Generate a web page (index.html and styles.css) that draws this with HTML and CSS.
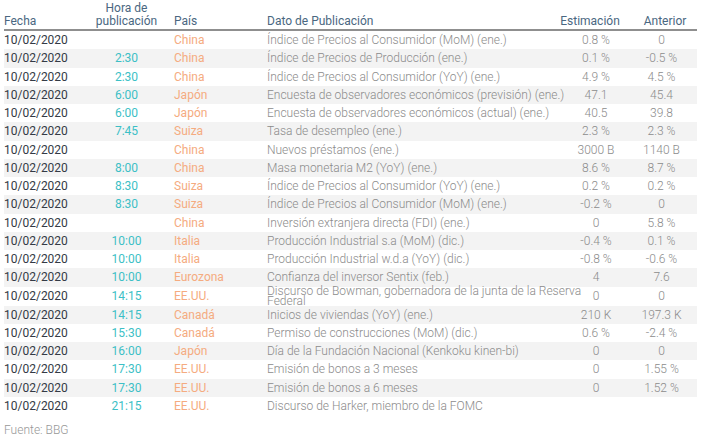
FILE: index.html
```html
<!DOCTYPE html>
<html lang="es">
<head>
<meta charset="utf-8">
<link rel="stylesheet" href="styles.css">
</head>
<body>
<div class="wrap">
<table class="cal">
  <colgroup>
    <col class="c-date"><col class="c-time"><col class="c-country"><col class="c-desc"><col class="c-est"><col class="c-prev">
  </colgroup>
  <thead>
    <tr>
      <th class="left">Fecha</th>
      <th class="center">Hora de<br>publicación</th>
      <th class="left pais">País</th>
      <th class="left">Dato de Publicación</th>
      <th class="center"><span class="est">Estimación</span></th>
      <th class="center ant">Anterior</th>
    </tr>
  </thead>
  <tbody>
    <tr><td class="date">10/02/2020</td><td class="time"></td><td class="country">China</td><td class="desc">Índice de Precios al Consumidor (MoM) (ene.)</td><td class="num">0.8 %</td><td class="num">0</td></tr>
    <tr><td class="date">10/02/2020</td><td class="time">2:30</td><td class="country">China</td><td class="desc">Índice de Precios de Producción (ene.)</td><td class="num">0.1 %</td><td class="num">-0.5 %</td></tr>
    <tr><td class="date">10/02/2020</td><td class="time">2:30</td><td class="country">China</td><td class="desc">Índice de Precios al Consumidor (YoY) (ene.)</td><td class="num">4.9 %</td><td class="num">4.5 %</td></tr>
    <tr><td class="date">10/02/2020</td><td class="time">6:00</td><td class="country">Japón</td><td class="desc">Encuesta de observadores económicos (previsión) (ene.)</td><td class="num">47.1</td><td class="num">45.4</td></tr>
    <tr><td class="date">10/02/2020</td><td class="time">6:00</td><td class="country">Japón</td><td class="desc">Encuesta de observadores económicos (actual) (ene.)</td><td class="num">40.5</td><td class="num">39.8</td></tr>
    <tr><td class="date">10/02/2020</td><td class="time">7:45</td><td class="country">Suiza</td><td class="desc">Tasa de desempleo (ene.)</td><td class="num">2.3 %</td><td class="num">2.3 %</td></tr>
    <tr><td class="date">10/02/2020</td><td class="time"></td><td class="country">China</td><td class="desc">Nuevos préstamos (ene.)</td><td class="num">3000 B</td><td class="num">1140 B</td></tr>
    <tr><td class="date">10/02/2020</td><td class="time">8:00</td><td class="country">China</td><td class="desc">Masa monetaria M2 (YoY) (ene.)</td><td class="num">8.6 %</td><td class="num">8.7 %</td></tr>
    <tr><td class="date">10/02/2020</td><td class="time">8:30</td><td class="country">Suiza</td><td class="desc">Índice de Precios al Consumidor (YoY) (ene.)</td><td class="num">0.2 %</td><td class="num">0.2 %</td></tr>
    <tr><td class="date">10/02/2020</td><td class="time">8:30</td><td class="country">Suiza</td><td class="desc">Índice de Precios al Consumidor (MoM) (ene.)</td><td class="num">-0.2 %</td><td class="num">0</td></tr>
    <tr><td class="date">10/02/2020</td><td class="time"></td><td class="country">China</td><td class="desc">Inversión extranjera directa (FDI) (ene.)</td><td class="num">0</td><td class="num">5.8 %</td></tr>
    <tr><td class="date">10/02/2020</td><td class="time">10:00</td><td class="country">Italia</td><td class="desc">Producción Industrial s.a (MoM) (dic.)</td><td class="num">-0.4 %</td><td class="num">0.1 %</td></tr>
    <tr><td class="date">10/02/2020</td><td class="time">10:00</td><td class="country">Italia</td><td class="desc">Producción Industrial w.d.a (YoY) (dic.)</td><td class="num">-0.8 %</td><td class="num">-0.6 %</td></tr>
    <tr><td class="date">10/02/2020</td><td class="time">10:00</td><td class="country">Eurozona</td><td class="desc">Confianza del inversor Sentix (feb.)</td><td class="num">4</td><td class="num">7.6</td></tr>
    <tr><td class="date">10/02/2020</td><td class="time">14:15</td><td class="country">EE.UU.</td><td class="desc two"><div class="two-lines">Discurso de Bowman, gobernadora de la junta de la Reserva<br>Federal</div></td><td class="num">0</td><td class="num">0</td></tr>
    <tr><td class="date">10/02/2020</td><td class="time">14:15</td><td class="country">Canadá</td><td class="desc">Inicios de viviendas (YoY) (ene.)</td><td class="num">210 K</td><td class="num">197.3 K</td></tr>
    <tr><td class="date">10/02/2020</td><td class="time">15:30</td><td class="country">Canadá</td><td class="desc">Permiso de construcciones (MoM) (dic.)</td><td class="num">0.6 %</td><td class="num">-2.4 %</td></tr>
    <tr><td class="date">10/02/2020</td><td class="time">16:00</td><td class="country">Japón</td><td class="desc">Día de la Fundación Nacional (Kenkoku kinen-bi)</td><td class="num">0</td><td class="num">0</td></tr>
    <tr><td class="date">10/02/2020</td><td class="time">17:30</td><td class="country">EE.UU.</td><td class="desc">Emisión de bonos a 3 meses</td><td class="num">0</td><td class="num">1.55 %</td></tr>
    <tr><td class="date">10/02/2020</td><td class="time">17:30</td><td class="country">EE.UU.</td><td class="desc">Emisión de bonos a 6 meses</td><td class="num">0</td><td class="num">1.52 %</td></tr>
    <tr><td class="date">10/02/2020</td><td class="time">21:15</td><td class="country">EE.UU.</td><td class="desc">Discurso de Harker, miembro de la FOMC</td><td class="num"></td><td class="num"></td></tr>
  </tbody>
</table>
<p class="source">Fuente: BBG</p>
</div>
</body>
</html>
```
FILE: styles.css
```css
html, body {
  margin: 0;
  padding: 0;
  background: #ffffff;
}
body {
  font-family: Roboto, "Liberation Sans", sans-serif;
  font-size: 12px;
  color: #333a45;
}
.wrap {
  padding: 0 17px 0 4px;
}
.cal {
  width: 693px;
  border-collapse: collapse;
  table-layout: fixed;
}
.c-date { width: 82px; }
.c-time { width: 81px; }
.c-country { width: 100px; }
.c-desc { width: 299px; }
.c-est { width: 60px; }
.c-prev { width: 71px; }

.cal th {
  font-weight: 400;
  color: #4a6781;
  line-height: 13px;
  vertical-align: bottom;
  padding: 2px 0 1px 0;
  border-bottom: 2px solid #8f8f8f;
  white-space: nowrap;
}
.cal th.left { text-align: left; }
.cal th.center { text-align: center; }
.cal th.pais { padding-left: 7px; }
.cal th.ant { padding-left: 7px; }
.est {
  display: inline-block;
  margin-left: -12px;
}
.cal td {
  padding: 4px 0;
  line-height: 10.25px;
  vertical-align: middle;
  white-space: nowrap;
}
.cal tbody tr:nth-child(even) td {
  background: #f3f3f3;
}
.cal td.date { color: #333a45; }
.cal td.time { color: #3cbfc6; text-align: center; }
.cal td.country { color: #f5ab80; padding-left: 7px; }
.cal td.desc { color: #8b8b8b; font-weight: 300; }
.cal td.num { color: #8b8b8b; text-align: center; font-weight: 300; }
.cal td.desc.two {
  padding: 0;
}
.two-lines {
  line-height: 10.5px;
  margin: -1px 0;
}
.source {
  margin: 8px 0 0 0;
  color: #979797;
  font-size: 12px;
  font-weight: 300;
}
```
